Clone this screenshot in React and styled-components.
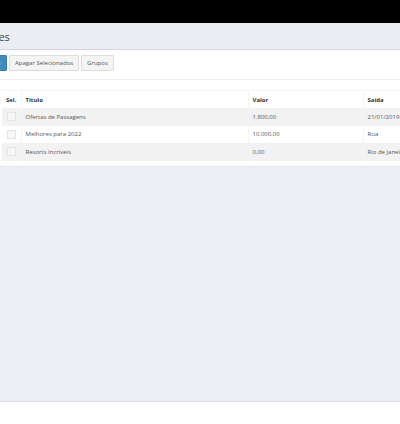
import styled, { createGlobalStyle } from 'styled-components';

const GlobalStyle = createGlobalStyle`
  html, body {
    margin: 0;
    padding: 0;
    background: #ffffff;
    font-family: "Open Sans", "Liberation Sans", sans-serif;
  }
`;

const offers = [
  { id: 1, title: 'Ofertas de Passagens', value: '1.800,00', departure: '21/01/2019' },
  { id: 2, title: 'Melhores para 2022', value: '10.000,00', departure: 'Rua' },
  { id: 3, title: 'Resorts Incríveis', value: '0,00', departure: 'Rio de Janeiro' },
];

export default function App() {
  return (
    <>
      <GlobalStyle />
      <Page>
        <TopBar />
        <Wrapper>
          <Header>
            <Title>Promoções</Title>
          </Header>
          <Box>
            <Toolbar>
              <Button primary>Nova</Button>
              <Button>Apagar Selecionados</Button>
              <Button>Grupos</Button>
            </Toolbar>
            <Table>
              <colgroup>
                <col style={{ width: 19 }} />
                <col style={{ width: 227 }} />
                <col style={{ width: 115 }} />
                <col />
              </colgroup>
              <thead>
                <tr>
                  <Th>Sel.</Th>
                  <Th>Titulo</Th>
                  <Th>Valor</Th>
                  <Th>Saída</Th>
                </tr>
              </thead>
              <tbody>
                {offers.map((o) => (
                  <Row key={o.id}>
                    <Td>
                      <Check />
                    </Td>
                    <Td>{o.title}</Td>
                    <Td>{o.value}</Td>
                    <Td>{o.departure}</Td>
                  </Row>
                ))}
              </tbody>
            </Table>
          </Box>
          <Body />
        </Wrapper>
      </Page>
    </>
  );
}

const Page = styled.div`
  width: 400px;
  height: 424px;
  overflow: hidden;
  background: #ffffff;
`;

const TopBar = styled.div`
  height: 23px;
  background: #000000;
`;

const Wrapper = styled.div`
  width: 460px;
`;

const Header = styled.div`
  height: 26px;
  background: #eaeef2;
  border-bottom: 1px solid #d2d6de;
  display: flex;
  align-items: center;
  overflow: hidden;
  margin-left: -48px;
`;

const Title = styled.h1`
  margin: 0;
  font-size: 11px;
  font-weight: 400;
  color: #444444;
  font-family: "Open Sans", "Liberation Sans", sans-serif;
`;

const Box = styled.div`
  background: #ffffff;
  padding: 5px 0 5px 2px;
  border-bottom: 1px solid #e2e5ea;
`;

const Toolbar = styled.div`
  display: flex;
  gap: 2px;
  padding-bottom: 8px;
  border-bottom: 1px solid #f0f0f0;
  margin-bottom: 10px;
  margin-left: -23px;
`;

const Button = styled.button`
  height: 16px;
  width: ${(p) => (p.primary ? '28px' : 'auto')};
  padding: 0 5px;
  font-family: "Open Sans", "Liberation Sans", sans-serif;
  font-size: 6px;
  color: ${(p) => (p.primary ? '#ffffff' : '#555555')};
  background: ${(p) => (p.primary ? '#3c8dbc' : '#f4f4f4')};
  border: 1px solid ${(p) => (p.primary ? '#367fa9' : '#dddddd')};
  border-radius: 1px;
`;

const Table = styled.table`
  border-collapse: collapse;
  table-layout: fixed;
  width: 458px;
  font-family: "Open Sans", "Liberation Sans", sans-serif;
  font-size: 6px;
  color: #555555;
`;

const Th = styled.th`
  height: 17px;
  padding: 0 4px;
  text-align: left;
  font-weight: 700;
  color: #333333;
  border-top: 1px solid #f4f4f4;
  border-left: 1px solid #f4f4f4;
  &:first-child {
    border-left: none;
  }
`;

const Row = styled.tr`
  height: 17.5px;
  &:nth-child(odd) {
    background: #f2f2f2;
  }
  &:nth-child(even) {
    background: #ffffff;
  }
`;

const Td = styled.td`
  padding: 0 4px;
  border-left: 1px solid #f4f4f4;
  white-space: nowrap;
  overflow: hidden;
  &:first-child {
    border-left: none;
  }
`;

const Check = styled.span`
  display: block;
  width: 7px;
  height: 7px;
  margin-left: 1px;
  border: 1px solid #e4e4e4;
  background: #f7f7f7;
`;

const Body = styled.div`
  height: 234px;
  background: #eceff3;
  border-bottom: 1px solid #d8dce3;
`;
